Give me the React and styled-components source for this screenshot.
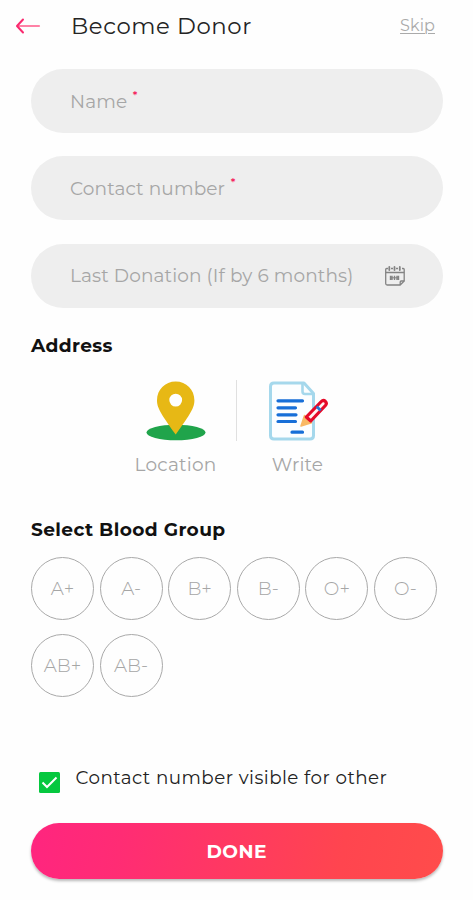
import { useState } from 'react';
import styled, { createGlobalStyle } from 'styled-components';

const GlobalStyle = createGlobalStyle`
  * {
    box-sizing: border-box;
  }
  body {
    margin: 0;
    background-color: #fefefe;
    font-family: Montserrat, Inter, 'Open Sans', sans-serif;
  }
`;

const Screen = styled.main`
  display: flex;
  flex-direction: column;
  width: 473px;
  height: 900px;
  overflow: hidden;
  background-color: #fefefe;
`;

const Header = styled.header`
  display: flex;
  align-items: center;
  height: 51px;
  margin-bottom: 18px;
  padding: 0 38px 0 15px;
`;

const BackButton = styled.button`
  display: flex;
  padding: 0;
  border: none;
  background: none;
`;

const Title = styled.h1`
  flex: 1;
  margin: 1px 0 0 29px;
  color: #242424;
  font-size: 22.8px;
  font-weight: 400;
  line-height: 30px;
  letter-spacing: 0.6px;
  white-space: nowrap;
`;

const SkipLink = styled.a`
  color: #aaaaaa;
  font-size: 16px;
  line-height: 20px;
  letter-spacing: 0.1px;
  text-decoration: underline;
  text-underline-offset: 2px;
  text-decoration-thickness: 1px;
`;

const Content = styled.div`
  display: flex;
  flex-direction: column;
  padding: 0 31px;
`;

const Fields = styled.div`
  display: flex;
  flex-direction: column;
  gap: 23.3px;
  width: 411.5px;
`;

const Field = styled.div`
  display: flex;
  align-items: center;
  justify-content: space-between;
  height: 64px;
  padding: 0 37.5px 0 39px;
  border-radius: 32px;
  background-color: #eeeeee;
`;

const FieldLabel = styled.span`
  padding-top: 1px;
  color: #a6a6a6;
  font-size: 18.5px;
  line-height: 24px;
  letter-spacing: 0.12px;
  white-space: nowrap;
`;

// 필수 입력 표시
const Required = styled.sup`
  margin-left: 5.5px;
  color: #f5265f;
  font-size: 11px;
  font-weight: 600;
  line-height: 0;
  vertical-align: 9px;
`;

const SectionTitle = styled.h2`
  margin: ${({ $top }) => $top || 0}px 0 0;
  color: #111111;
  font-size: 18.6px;
  font-weight: 700;
  line-height: 24px;
  letter-spacing: 0.38px;
`;

const AddressOptions = styled.div`
  display: flex;
  height: 100px;
  margin: 22px 0 38px 104px;
`;

const AddressOption = styled.button`
  display: flex;
  flex-direction: column;
  align-items: center;
  width: ${({ $width }) => $width}px;
  padding: 0;
  border: none;
  background: none;
  color: #a6a6a6;
  font-family: inherit;
  font-size: 18.5px;
  line-height: 24px;
  letter-spacing: 0.2px;

  svg {
    margin-bottom: 12px;
  }
`;

const Divider = styled.div`
  width: 1px;
  height: 61px;
  margin: 0 0 0 20px;
  background-color: #e0e0e0;
`;

const BloodGroups = styled.div`
  display: grid;
  grid-template-columns: repeat(6, 63px);
  gap: 14.5px 5.6px;
  margin-top: 15px;
`;

const BloodGroup = styled.button`
  display: flex;
  align-items: center;
  justify-content: center;
  width: 63px;
  height: 63px;
  padding: 0;
  border: 1px solid ${({ $active }) => ($active ? '#ff257c' : '#a9a9a9')};
  border-radius: 50%;
  background: none;
  color: ${({ $active }) => ($active ? '#ff257c' : '#a6a6a6')};
  font-family: inherit;
  font-size: 18.5px;
  font-weight: 300;
`;

const VisibleRow = styled.label`
  display: flex;
  align-items: flex-start;
  margin: 69px 0 0 8px;
`;

const CheckBox = styled.span`
  display: flex;
  align-items: center;
  justify-content: center;
  width: 21px;
  height: 21px;
  margin: 6px 15.5px 0 0;
  border-radius: 1.5px;
  background-color: #06c83f;
`;

const VisibleLabel = styled.span`
  color: #222222;
  font-size: 18.3px;
  line-height: 24px;
  letter-spacing: 0.45px;
  white-space: nowrap;
`;

const DoneButton = styled.button`
  width: 411.5px;
  height: 56px;
  margin-top: 30px;
  padding: 1px 0 0;
  border: none;
  border-radius: 28px;
  background: linear-gradient(100deg, #ff257f 0%, #ff2c74 22%, #ff454f 75%, #ff4c4b 100%);
  box-shadow: 0 2px 3px rgba(0, 0, 0, 0.28);
  color: #ffffff;
  font-family: inherit;
  font-size: 18.6px;
  font-weight: 700;
  letter-spacing: 0.45px;
`;

const BackIcon = () => (
  <svg width="27" height="16" viewBox="0 0 27 16" fill="none" strokeLinecap="round">
    <path d="M3 8h21" stroke="#ff82a6" strokeWidth="2.2" />
    <path d="M8 1.5L2 8l6 6.5" stroke="#fa2a6f" strokeWidth="2" strokeLinejoin="round" />
  </svg>
);

const CalendarIcon = () => (
  <svg width="20" height="20" viewBox="0 0 20 20" fill="none" stroke="#838383" strokeWidth="1.3" strokeLinejoin="round">
    <path d="M3 2.5H1.7Q.7 2.5.7 3.5v14q0 1.5 1.5 1.5h13l4-4V3.5q0-1-1-1H17M6 2.5h2M11 2.5h2" />
    <path d="M.7 6.5h18.5M15.2 19v-3q0-1 1-1h3" />
    <path d="M4.3 1v3M9.5 1v3M14.8 1v3" strokeWidth="1.8" strokeLinecap="round" />
    <path d="M5.5 9.7v4.3M7 9.7v4.3M9.500 9.700v4.300M12 9.700v4.300M13.500 9.700v4.300" strokeWidth="1.4" />
    <path d="M5 11.800h9" strokeWidth="1" />
  </svg>
);

const LocationIcon = () => (
  <svg width="60" height="61" viewBox="0 0 60 61">
    <ellipse cx="30" cy="52.500" rx="29.500" ry="7.800" fill="#20a44b" />
    <path
      fillRule="evenodd"
      fill="#e7b815"
      d="M29.700 1.500C19 1.500 11 9.700 11 20.200c0 7.300 3.300 12.700 18.700 34.300C45.100 33 48.400 27.500 48.400 20.200 48.400 9.700 40.400 1.500 29.700 1.500ZM29.700 13.700a6.400 6.400 0 1 1 0 12.800 6.400 6.400 0 0 1 0-12.800Z"
    />
  </svg>
);

const WriteIcon = () => (
  <svg width="60" height="61" viewBox="0 0 60 61" fill="none">
    <path
      d="M36 3H6Q2.500 3 2.500 6.500v49Q2.500 59 6 59h36q3.500 0 3.500-3.500V13.500L36 3Z"
      fill="#fcfeff"
      stroke="#a5d8ec"
      strokeWidth="3"
      strokeLinejoin="round"
    />
    <path d="M34.500 3.500v8q0 2.500 2.500 2.500h8" stroke="#a5d8ec" strokeWidth="2.600" />
    <path d="M10 20.800h24.500M10 27.800h17.500M10 34.800h18M10 41.500h17.500M24 52.200h10.500" stroke="#176fd8" strokeWidth="3.200" strokeLinecap="round" />
    <path d="M33 46l3.500-10.500 7 7.200L33 46Z" fill="#f9b965" stroke="#f9b965" strokeWidth="1.500" strokeLinejoin="round" />
    <path d="M38.300 37L53.300 21.500q2-2 4-.2 2 2 .1 4.200L42.800 41Z" fill="#fff5f3" stroke="#e50b29" strokeWidth="3.200" strokeLinejoin="round" />
    <path d="M48.700 26.500l4 4" stroke="#2677d6" strokeWidth="2.800" />
  </svg>
);

const CheckIcon = () => (
  <svg width="17" height="15" viewBox="0 0 17 15" fill="none">
    <path d="M1.500 7.500l4.500 4.500L15.500 2.500" stroke="#ffffff" strokeWidth="2" />
  </svg>
);

const bloodGroups = ['A+', 'A-', 'B+', 'B-', 'O+', 'O-', 'AB+', 'AB-'];

const App = () => {
  const [selected, setSelected] = useState(null);

  return (
    <>
      <GlobalStyle />
      <Screen>
        <Header>
          <BackButton aria-label="Back">
            <BackIcon />
          </BackButton>
          <Title>Become Donor</Title>
          <SkipLink>Skip</SkipLink>
        </Header>
        <Content>
          <Fields>
            <Field>
              <FieldLabel>
                Name<Required>*</Required>
              </FieldLabel>
            </Field>
            <Field>
              <FieldLabel>
                Contact number<Required>*</Required>
              </FieldLabel>
            </Field>
            <Field>
              <FieldLabel>Last Donation (If by 6 months)</FieldLabel>
              <CalendarIcon />
            </Field>
          </Fields>

          <SectionTitle $top={26}>Address</SectionTitle>
          <AddressOptions>
            <AddressOption $width={81}>
              <LocationIcon />
              Location
            </AddressOption>
            <Divider />
            <AddressOption $width={121}>
              <WriteIcon />
              Write
            </AddressOption>
          </AddressOptions>

          <SectionTitle>Select Blood Group</SectionTitle>
          <BloodGroups>
            {bloodGroups.map((group) => (
              <BloodGroup key={group} $active={selected === group} onClick={() => setSelected(group)}>
                {group}
              </BloodGroup>
            ))}
          </BloodGroups>

          <VisibleRow>
            <CheckBox>
              <CheckIcon />
            </CheckBox>
            <VisibleLabel>Contact number visible for other</VisibleLabel>
          </VisibleRow>
          <DoneButton>DONE</DoneButton>
        </Content>
      </Screen>
    </>
  );
};

export default App;
